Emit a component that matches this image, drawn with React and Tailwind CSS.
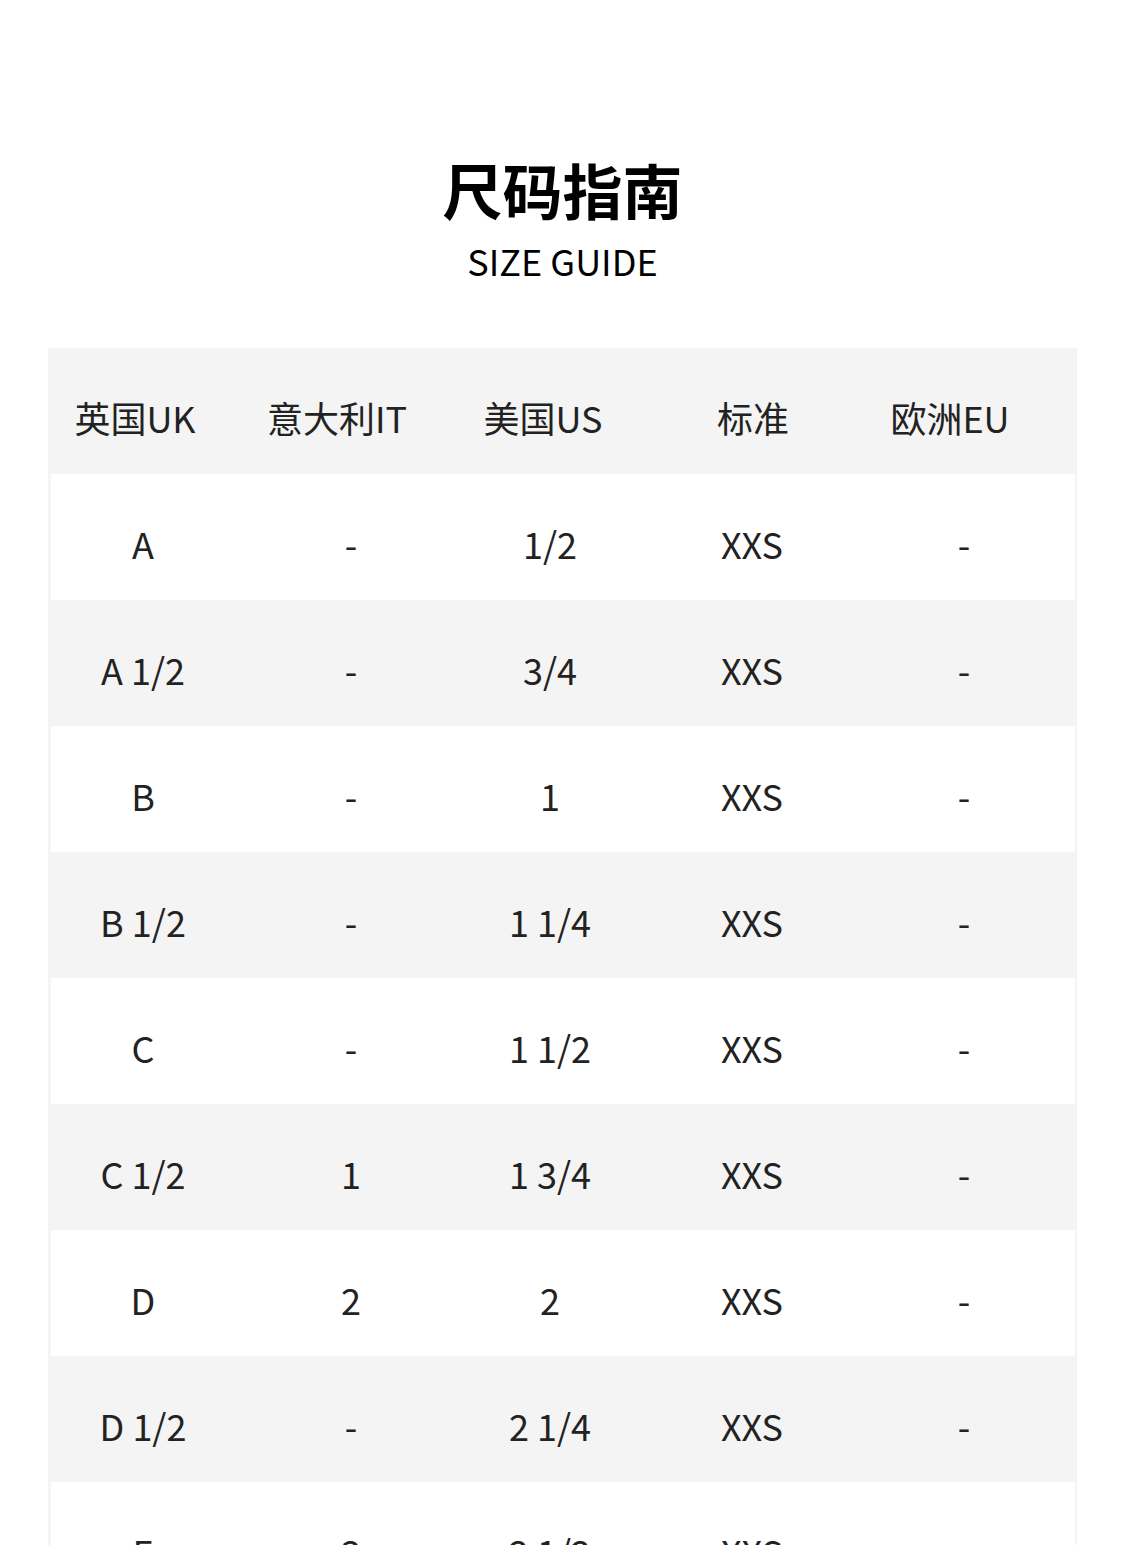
const HEAD = ['英国UK', '意大利IT', '美国US', '标准', '欧洲EU']

const ROWS = [
  ['A', '-', '1/2', 'XXS', '-'],
  ['A 1/2', '-', '3/4', 'XXS', '-'],
  ['B', '-', '1', 'XXS', '-'],
  ['B 1/2', '-', '1 1/4', 'XXS', '-'],
  ['C', '-', '1 1/2', 'XXS', '-'],
  ['C 1/2', '1', '1 3/4', 'XXS', '-'],
  ['D', '2', '2', 'XXS', '-'],
  ['D 1/2', '-', '2 1/4', 'XXS', '-'],
  ['E', '3', '2 1/2', 'XXS', '-'],
  ['E 1/2', '-', '2 3/4', 'XXS', '-'],
]

export default function App() {
  return (
    <div
      className="min-h-screen bg-white text-[#222]"
      style={{ fontFamily: '"Noto Sans CJK SC", "Noto Sans", sans-serif' }}
    >
      {/* Title */}
      <div className="flex flex-col items-center pt-[147px]">
        <h1 className="text-[60px] font-bold leading-[84px] text-black">尺码指南</h1>
        <p className="mt-[4px] text-[36px] leading-[50px] text-black">SIZE GUIDE</p>
      </div>

      {/* Table */}
      <div className="mx-[48px] mt-[63px] w-[1029px] bg-[#f4f4f4] pl-[3px] pr-[2px]">
        <div className="grid h-[126px] grid-cols-[168px_236px_176px_244px_150px] items-center pt-[11px] text-[36px]">
          {HEAD.map((h) => (
            <div key={h} className="text-center">{h}</div>
          ))}
        </div>
        {ROWS.map((row, i) => (
          <div
            key={i}
            className={`grid h-[126px] grid-cols-[184px_232px_166px_238px_186px] items-center pt-[11px] text-[36px] ${
              i % 2 === 0 ? 'bg-white' : ''
            }`}
          >
            {row.map((cell, j) => (
              <div key={j} className="text-center">{cell}</div>
            ))}
          </div>
        ))}
      </div>
    </div>
  )
}
